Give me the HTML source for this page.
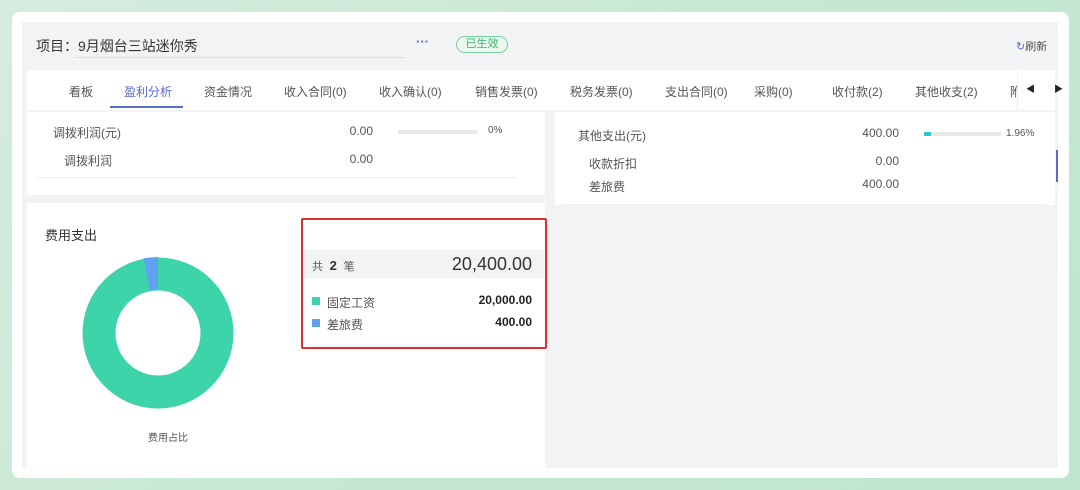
<!DOCTYPE html>
<html><head><meta charset="utf-8"><style>
*{margin:0;padding:0;box-sizing:border-box}
body{width:1080px;height:490px;overflow:hidden;background:linear-gradient(135deg,#d6ecdf,#c7e8d3 50%,#bfe6cf);font-family:"Liberation Sans","Noto Sans CJK SC",sans-serif;color:#333;position:relative}
.abs{position:absolute}
.card{left:12px;top:12px;width:1057px;height:466px;background:#fff;border-radius:8px}
.gray{left:22px;top:22px;width:1036px;height:446px;background:#f2f3f5}
.t{position:absolute;font-size:12px;white-space:nowrap;color:#555}
.r{position:absolute;font-size:12px;white-space:nowrap;color:#555;text-align:right}
</style></head><body>
<div class="abs card"></div>
<div class="abs gray"></div>
<div class="t" style="left:36px;top:36px;font-size:14px;color:#333">项目：9月烟台三站迷你秀</div>
<div class="abs" style="left:74px;top:57px;width:330px;height:1px;background:#ddd"></div>
<div class="t" style="left:416px;top:34px;color:#5a6ad0;font-size:13px;font-weight:bold">···</div>
<div class="abs" style="left:456px;top:36px;width:52px;height:17px;border:1px solid #7cd2a0;border-radius:9px;background:#eaf8ef;color:#3bb56b;font-size:11px;text-align:center;line-height:15px">已生效</div>
<div class="t" style="left:1016px;top:38px;font-size:11px;color:#555"><span style="color:#5a6ad0">↻</span>刷新</div>
<div class="abs" style="left:27px;top:70px;width:1028px;height:40px;background:#fff"></div>
<div class="t" style="left:69px;top:83px">看板</div>
<div class="t" style="left:124px;top:83px;color:#5a6ad0">盈利分析</div>
<div class="abs" style="left:110px;top:106px;width:73px;height:2px;background:#5a6ad0"></div>
<div class="t" style="left:204px;top:83px">资金情况</div>
<div class="t" style="left:284px;top:83px">收入合同(0)</div>
<div class="t" style="left:379px;top:83px">收入确认(0)</div>
<div class="t" style="left:475px;top:83px">销售发票(0)</div>
<div class="t" style="left:570px;top:83px">税务发票(0)</div>
<div class="t" style="left:665px;top:83px">支出合同(0)</div>
<div class="t" style="left:754px;top:83px">采购(0)</div>
<div class="t" style="left:832px;top:83px">收付款(2)</div>
<div class="t" style="left:915px;top:83px">其他收支(2)</div>
<div class="t" style="left:1010px;top:83px">附</div>
<div class="abs" style="left:1017px;top:70px;width:38px;height:40px;background:#fff;border-left:1px solid #eee"></div>
<div class="t" style="left:1026px;top:82px;font-size:9px;color:#222">◀</div>
<div class="t" style="left:1054px;top:82px;font-size:9px;color:#222">▶</div>
<div class="abs" style="left:27px;top:112px;width:518px;height:83px;background:#fff"></div>
<div class="t" style="left:53px;top:124px">调拨利润(元)</div>
<div class="r" style="right:707px;top:124px">0.00</div>
<div class="abs" style="left:398px;top:130px;width:80px;height:4px;background:#e8e8e8;border-radius:2px"></div>
<div class="t" style="left:488px;top:125px;font-size:10px">0%</div>
<div class="t" style="left:64px;top:152px">调拨利润</div>
<div class="r" style="right:707px;top:152px">0.00</div>
<div class="abs" style="left:37px;top:177px;width:480px;height:1px;background:#eee"></div>
<div class="abs" style="left:27px;top:203px;width:518px;height:265px;background:#fff"></div>
<div class="t" style="left:45px;top:225px;font-size:13px;color:#333">费用支出</div>
<svg class="abs" style="left:78px;top:253px" width="160" height="170" viewBox="0 0 160 170">
<circle cx="80" cy="80" r="59" fill="none" stroke="#3dd4aa" stroke-width="33"/>
<path d="M80 4 A76 76 0 0 0 65.5 5.4 L71.8 37.8 A43 43 0 0 1 80 37 Z" fill="#5fa3f0"/>
</svg>
<div class="t" style="left:148px;top:429px;font-size:10px">费用占比</div>
<div class="abs" style="left:301px;top:218px;width:246px;height:131px;border:2px solid #e02d2d;border-radius:2px"></div>
<div class="abs" style="left:304px;top:250px;width:240px;height:28px;background:#f2f3f5"></div>
<div class="t" style="left:312px;top:258px;font-size:11px">共 <b style="font-size:13px;color:#333">&nbsp;2&nbsp;</b> 笔</div>
<div class="r" style="right:548px;top:254px;font-size:18px;color:#333">20,400.00</div>
<div class="abs" style="left:312px;top:297px;width:8px;height:8px;background:#3dd4aa"></div>
<div class="t" style="left:327px;top:294px">固定工资</div>
<div class="r" style="right:548px;top:293px;font-weight:bold;color:#222">20,000.00</div>
<div class="abs" style="left:312px;top:319px;width:8px;height:8px;background:#5fa3f0"></div>
<div class="t" style="left:327px;top:316px">差旅费</div>
<div class="r" style="right:548px;top:315px;font-weight:bold;color:#222">400.00</div>
<div class="abs" style="left:555px;top:112px;width:500px;height:93px;background:#fff"></div>
<div class="t" style="left:578px;top:127px">其他支出(元)</div>
<div class="r" style="right:181px;top:126px">400.00</div>
<div class="abs" style="left:924px;top:132px;width:77px;height:4px;background:#e8e8e8"></div>
<div class="abs" style="left:924px;top:132px;width:7px;height:4px;background:#2ec7c9"></div>
<div class="t" style="left:1006px;top:128px;font-size:10px">1.96%</div>
<div class="t" style="left:589px;top:155px">收款折扣</div>
<div class="r" style="right:181px;top:154px">0.00</div>
<div class="t" style="left:589px;top:178px">差旅费</div>
<div class="r" style="right:181px;top:177px">400.00</div>
<div class="abs" style="left:562px;top:204px;width:485px;height:1px;background:#eee"></div>
<div class="abs" style="left:1056px;top:150px;width:2px;height:32px;background:#5a6ad0"></div>
</body></html>
